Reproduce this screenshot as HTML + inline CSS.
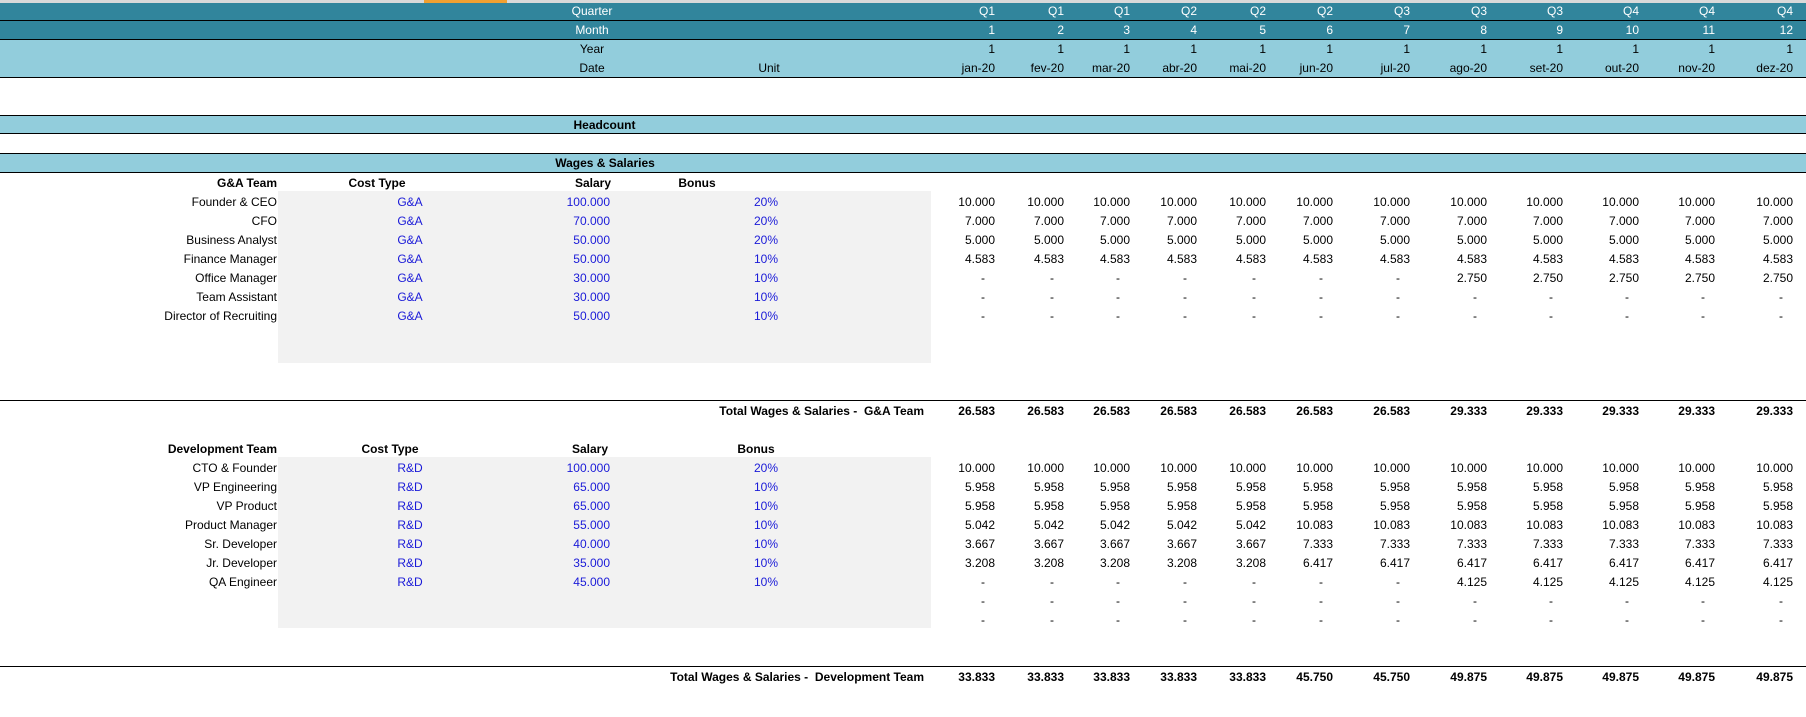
<!DOCTYPE html>
<html><head><meta charset="utf-8"><style>
*{margin:0;padding:0;box-sizing:border-box}
body{width:1806px;height:717px;background:#fff;position:relative;overflow:hidden;font-family:"Liberation Sans Narrow","Liberation Sans",Arial,sans-serif;font-size:12px;color:#000}
.band{position:absolute;left:0;width:1806px}
.r{position:absolute;left:0;width:1806px;height:18px;line-height:18px}
.r span{position:absolute;white-space:nowrap}
.c1,.c2,.c3,.c4,.c5,.c6,.c7,.c8,.c9,.c10,.c11,.c12{width:70px;text-align:right}
.c1{left:925px}.c2{left:994px}.c3{left:1060px}.c4{left:1127px}.c5{left:1196px}.c6{left:1263px}.c7{left:1340px}.c8{left:1417px}.c9{left:1493px}.c10{left:1569px}.c11{left:1645px}.c12{left:1723px}
.d{padding-right:10px}
.lab{left:0;width:277px;text-align:right}
.ct{left:350px;width:120px;text-align:center;color:#1a1ad8}
.sal{left:490px;width:120px;text-align:right;color:#1a1ad8}
.bon{left:678px;width:100px;text-align:right;color:#1a1ad8}
.b{font-weight:bold}
.w{color:#fff}
.line{position:absolute;left:0;width:1806px;height:1px;background:#000}
</style></head><body>
<div class="band" style="top:0;height:3px;background:#d9d9d9"></div>
<div style="position:absolute;top:0;left:424px;width:83px;height:3px;background:#f0a030"></div>
<div class="band" style="top:3px;height:18px;background:#31859c"></div>
<div class="line" style="top:20px"></div>
<div class="band" style="top:21px;height:18px;background:#31859c"></div>
<div class="line" style="top:39px"></div>
<div class="band" style="top:40px;height:37px;background:#92cddc"></div>
<div class="line" style="top:77px"></div>
<div class="line" style="top:115px"></div>
<div class="band" style="top:116px;height:18px;background:#92cddc"></div>
<div class="line" style="top:133px"></div>
<div class="line" style="top:153px"></div>
<div class="band" style="top:154px;height:18px;background:#92cddc"></div>
<div class="line" style="top:172px"></div>
<div style="position:absolute;left:278px;top:191px;width:653px;height:172px;background:#f2f2f2"></div>
<div style="position:absolute;left:278px;top:457px;width:653px;height:171px;background:#f2f2f2"></div>
<div class="line" style="top:400px"></div>
<div class="line" style="top:666px"></div>

<div class="r w" style="top:2px"><span style="left:542px;width:100px;text-align:center">Quarter</span><span class="c1">Q1</span><span class="c2">Q1</span><span class="c3">Q1</span><span class="c4">Q2</span><span class="c5">Q2</span><span class="c6">Q2</span><span class="c7">Q3</span><span class="c8">Q3</span><span class="c9">Q3</span><span class="c10">Q4</span><span class="c11">Q4</span><span class="c12">Q4</span></div>
<div class="r w" style="top:21px"><span style="left:542px;width:100px;text-align:center">Month</span><span class="c1">1</span><span class="c2">2</span><span class="c3">3</span><span class="c4">4</span><span class="c5">5</span><span class="c6">6</span><span class="c7">7</span><span class="c8">8</span><span class="c9">9</span><span class="c10">10</span><span class="c11">11</span><span class="c12">12</span></div>
<div class="r" style="top:40px"><span style="left:542px;width:100px;text-align:center">Year</span><span class="c1">1</span><span class="c2">1</span><span class="c3">1</span><span class="c4">1</span><span class="c5">1</span><span class="c6">1</span><span class="c7">1</span><span class="c8">1</span><span class="c9">1</span><span class="c10">1</span><span class="c11">1</span><span class="c12">1</span></div>
<div class="r" style="top:59px"><span style="left:542px;width:100px;text-align:center">Date</span><span style="left:719px;width:100px;text-align:center">Unit</span><span class="c1">jan-20</span><span class="c2">fev-20</span><span class="c3">mar-20</span><span class="c4">abr-20</span><span class="c5">mai-20</span><span class="c6">jun-20</span><span class="c7">jul-20</span><span class="c8">ago-20</span><span class="c9">set-20</span><span class="c10">out-20</span><span class="c11">nov-20</span><span class="c12">dez-20</span></div>
<div class="r b" style="top:116px"><span style="left:542px;width:125px;text-align:center">Headcount</span></div>
<div class="r b" style="top:154px"><span style="left:530px;width:150px;text-align:center">Wages &amp; Salaries</span></div>

<div class="r b" style="top:174px"><span class="lab">G&amp;A Team</span><span style="left:327px;width:100px;text-align:center">Cost Type</span><span style="left:543px;width:100px;text-align:center">Salary</span><span style="left:647px;width:100px;text-align:center">Bonus</span></div>
<div class="r" style="top:193px"><span class="lab">Founder &amp; CEO</span><span class="ct">G&amp;A</span><span class="sal">100.000</span><span class="bon">20%</span><span class="c1">10.000</span><span class="c2">10.000</span><span class="c3">10.000</span><span class="c4">10.000</span><span class="c5">10.000</span><span class="c6">10.000</span><span class="c7">10.000</span><span class="c8">10.000</span><span class="c9">10.000</span><span class="c10">10.000</span><span class="c11">10.000</span><span class="c12">10.000</span></div>
<div class="r" style="top:212px"><span class="lab">CFO</span><span class="ct">G&amp;A</span><span class="sal">70.000</span><span class="bon">20%</span><span class="c1">7.000</span><span class="c2">7.000</span><span class="c3">7.000</span><span class="c4">7.000</span><span class="c5">7.000</span><span class="c6">7.000</span><span class="c7">7.000</span><span class="c8">7.000</span><span class="c9">7.000</span><span class="c10">7.000</span><span class="c11">7.000</span><span class="c12">7.000</span></div>
<div class="r" style="top:231px"><span class="lab">Business Analyst</span><span class="ct">G&amp;A</span><span class="sal">50.000</span><span class="bon">20%</span><span class="c1">5.000</span><span class="c2">5.000</span><span class="c3">5.000</span><span class="c4">5.000</span><span class="c5">5.000</span><span class="c6">5.000</span><span class="c7">5.000</span><span class="c8">5.000</span><span class="c9">5.000</span><span class="c10">5.000</span><span class="c11">5.000</span><span class="c12">5.000</span></div>
<div class="r" style="top:250px"><span class="lab">Finance Manager</span><span class="ct">G&amp;A</span><span class="sal">50.000</span><span class="bon">10%</span><span class="c1">4.583</span><span class="c2">4.583</span><span class="c3">4.583</span><span class="c4">4.583</span><span class="c5">4.583</span><span class="c6">4.583</span><span class="c7">4.583</span><span class="c8">4.583</span><span class="c9">4.583</span><span class="c10">4.583</span><span class="c11">4.583</span><span class="c12">4.583</span></div>
<div class="r" style="top:269px"><span class="lab">Office Manager</span><span class="ct">G&amp;A</span><span class="sal">30.000</span><span class="bon">10%</span><span class="c1 d">-</span><span class="c2 d">-</span><span class="c3 d">-</span><span class="c4 d">-</span><span class="c5 d">-</span><span class="c6 d">-</span><span class="c7 d">-</span><span class="c8">2.750</span><span class="c9">2.750</span><span class="c10">2.750</span><span class="c11">2.750</span><span class="c12">2.750</span></div>
<div class="r" style="top:288px"><span class="lab">Team Assistant</span><span class="ct">G&amp;A</span><span class="sal">30.000</span><span class="bon">10%</span><span class="c1 d">-</span><span class="c2 d">-</span><span class="c3 d">-</span><span class="c4 d">-</span><span class="c5 d">-</span><span class="c6 d">-</span><span class="c7 d">-</span><span class="c8 d">-</span><span class="c9 d">-</span><span class="c10 d">-</span><span class="c11 d">-</span><span class="c12 d">-</span></div>
<div class="r" style="top:307px"><span class="lab">Director of Recruiting</span><span class="ct">G&amp;A</span><span class="sal">50.000</span><span class="bon">10%</span><span class="c1 d">-</span><span class="c2 d">-</span><span class="c3 d">-</span><span class="c4 d">-</span><span class="c5 d">-</span><span class="c6 d">-</span><span class="c7 d">-</span><span class="c8 d">-</span><span class="c9 d">-</span><span class="c10 d">-</span><span class="c11 d">-</span><span class="c12 d">-</span></div>
<div class="r b" style="top:402px"><span style="left:600px;width:324px;text-align:right">Total Wages &amp; Salaries -&nbsp; G&amp;A Team</span><span class="c1">26.583</span><span class="c2">26.583</span><span class="c3">26.583</span><span class="c4">26.583</span><span class="c5">26.583</span><span class="c6">26.583</span><span class="c7">26.583</span><span class="c8">29.333</span><span class="c9">29.333</span><span class="c10">29.333</span><span class="c11">29.333</span><span class="c12">29.333</span></div>

<div class="r b" style="top:440px"><span class="lab">Development Team</span><span style="left:340px;width:100px;text-align:center">Cost Type</span><span style="left:540px;width:100px;text-align:center">Salary</span><span style="left:706px;width:100px;text-align:center">Bonus</span></div>
<div class="r" style="top:459px"><span class="lab">CTO &amp; Founder</span><span class="ct">R&amp;D</span><span class="sal">100.000</span><span class="bon">20%</span><span class="c1">10.000</span><span class="c2">10.000</span><span class="c3">10.000</span><span class="c4">10.000</span><span class="c5">10.000</span><span class="c6">10.000</span><span class="c7">10.000</span><span class="c8">10.000</span><span class="c9">10.000</span><span class="c10">10.000</span><span class="c11">10.000</span><span class="c12">10.000</span></div>
<div class="r" style="top:478px"><span class="lab">VP Engineering</span><span class="ct">R&amp;D</span><span class="sal">65.000</span><span class="bon">10%</span><span class="c1">5.958</span><span class="c2">5.958</span><span class="c3">5.958</span><span class="c4">5.958</span><span class="c5">5.958</span><span class="c6">5.958</span><span class="c7">5.958</span><span class="c8">5.958</span><span class="c9">5.958</span><span class="c10">5.958</span><span class="c11">5.958</span><span class="c12">5.958</span></div>
<div class="r" style="top:497px"><span class="lab">VP Product</span><span class="ct">R&amp;D</span><span class="sal">65.000</span><span class="bon">10%</span><span class="c1">5.958</span><span class="c2">5.958</span><span class="c3">5.958</span><span class="c4">5.958</span><span class="c5">5.958</span><span class="c6">5.958</span><span class="c7">5.958</span><span class="c8">5.958</span><span class="c9">5.958</span><span class="c10">5.958</span><span class="c11">5.958</span><span class="c12">5.958</span></div>
<div class="r" style="top:516px"><span class="lab">Product Manager</span><span class="ct">R&amp;D</span><span class="sal">55.000</span><span class="bon">10%</span><span class="c1">5.042</span><span class="c2">5.042</span><span class="c3">5.042</span><span class="c4">5.042</span><span class="c5">5.042</span><span class="c6">10.083</span><span class="c7">10.083</span><span class="c8">10.083</span><span class="c9">10.083</span><span class="c10">10.083</span><span class="c11">10.083</span><span class="c12">10.083</span></div>
<div class="r" style="top:535px"><span class="lab">Sr. Developer</span><span class="ct">R&amp;D</span><span class="sal">40.000</span><span class="bon">10%</span><span class="c1">3.667</span><span class="c2">3.667</span><span class="c3">3.667</span><span class="c4">3.667</span><span class="c5">3.667</span><span class="c6">7.333</span><span class="c7">7.333</span><span class="c8">7.333</span><span class="c9">7.333</span><span class="c10">7.333</span><span class="c11">7.333</span><span class="c12">7.333</span></div>
<div class="r" style="top:554px"><span class="lab">Jr. Developer</span><span class="ct">R&amp;D</span><span class="sal">35.000</span><span class="bon">10%</span><span class="c1">3.208</span><span class="c2">3.208</span><span class="c3">3.208</span><span class="c4">3.208</span><span class="c5">3.208</span><span class="c6">6.417</span><span class="c7">6.417</span><span class="c8">6.417</span><span class="c9">6.417</span><span class="c10">6.417</span><span class="c11">6.417</span><span class="c12">6.417</span></div>
<div class="r" style="top:573px"><span class="lab">QA Engineer</span><span class="ct">R&amp;D</span><span class="sal">45.000</span><span class="bon">10%</span><span class="c1 d">-</span><span class="c2 d">-</span><span class="c3 d">-</span><span class="c4 d">-</span><span class="c5 d">-</span><span class="c6 d">-</span><span class="c7 d">-</span><span class="c8">4.125</span><span class="c9">4.125</span><span class="c10">4.125</span><span class="c11">4.125</span><span class="c12">4.125</span></div>
<div class="r" style="top:592px"><span class="c1 d">-</span><span class="c2 d">-</span><span class="c3 d">-</span><span class="c4 d">-</span><span class="c5 d">-</span><span class="c6 d">-</span><span class="c7 d">-</span><span class="c8 d">-</span><span class="c9 d">-</span><span class="c10 d">-</span><span class="c11 d">-</span><span class="c12 d">-</span></div>
<div class="r" style="top:611px"><span class="c1 d">-</span><span class="c2 d">-</span><span class="c3 d">-</span><span class="c4 d">-</span><span class="c5 d">-</span><span class="c6 d">-</span><span class="c7 d">-</span><span class="c8 d">-</span><span class="c9 d">-</span><span class="c10 d">-</span><span class="c11 d">-</span><span class="c12 d">-</span></div>
<div class="r b" style="top:668px"><span style="left:560px;width:364px;text-align:right">Total Wages &amp; Salaries -&nbsp; Development Team</span><span class="c1">33.833</span><span class="c2">33.833</span><span class="c3">33.833</span><span class="c4">33.833</span><span class="c5">33.833</span><span class="c6">45.750</span><span class="c7">45.750</span><span class="c8">49.875</span><span class="c9">49.875</span><span class="c10">49.875</span><span class="c11">49.875</span><span class="c12">49.875</span></div>
</body></html>
